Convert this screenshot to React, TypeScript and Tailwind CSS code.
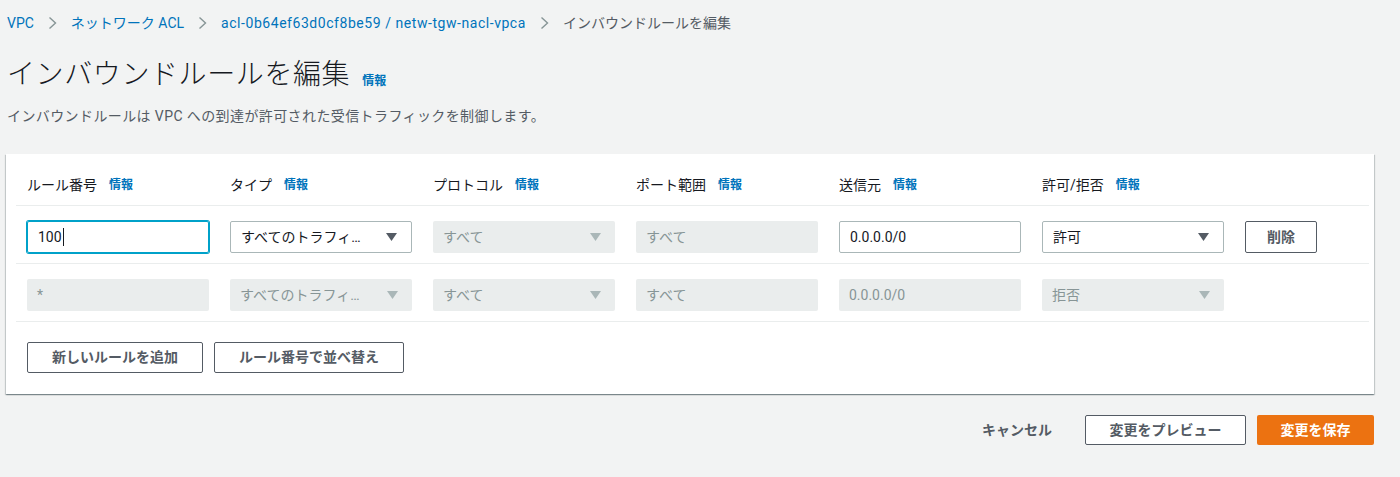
import React from 'react';

const FONT = "font-['Roboto','Noto_Sans_CJK_JP',sans-serif]";

const Info = () => (
  <span className="ml-[12px] text-[12px] font-bold text-[#0073bb]">情報</span>
);

const Chevron = () => (
  <svg width="9" height="14" viewBox="0 0 9 14" className="mx-[14px]">
    <polyline points="1.5,1.5 7.5,7 1.5,12.5" fill="none" stroke="#879596" strokeWidth="1.4" />
  </svg>
);

const Caret = ({ disabled }: { disabled?: boolean }) => (
  <svg width="11" height="8" viewBox="0 0 11 8">
    <polygon points="0,0 11,0 5.5,8" fill={disabled ? '#aab7b8' : '#545b64'} />
  </svg>
);

const Field = ({ value, disabled, focused }: { value: string; disabled?: boolean; focused?: boolean }) => {
  if (disabled) {
    return (
      <div className="flex h-[32px] w-[182px] items-center rounded-[2px] bg-[#eaeded] px-[10px] text-[14px] text-[#879596]">
        {value}
      </div>
    );
  }
  return (
    <div
      className={
        focused
          ? 'flex h-[32px] w-[182px] items-center rounded-[2px] border border-[#00a1c9] px-[10px] text-[14px] text-[#16191f] shadow-[0_0_0_1px_#00a1c9]'
          : 'flex h-[32px] w-[182px] items-center rounded-[2px] border border-[#aab7b8] px-[10px] text-[14px] text-[#16191f]'
      }
    >
      {value}
      {focused && <span className="ml-px h-[18px] w-px bg-[#16191f]" />}
    </div>
  );
};

const Select = ({ value, disabled }: { value: string; disabled?: boolean }) => (
  <div
    className={
      disabled
        ? 'flex h-[32px] w-[182px] items-center justify-between rounded-[2px] bg-[#eaeded] pl-[10px] pr-[14px] text-[14px] text-[#879596]'
        : 'flex h-[32px] w-[182px] items-center justify-between rounded-[2px] border border-[#aab7b8] pl-[10px] pr-[14px] text-[14px] text-[#16191f]'
    }
  >
    <span className="max-w-[130px] truncate">{value}</span>
    <Caret disabled={disabled} />
  </div>
);

const Btn = ({ children, w }: { children: React.ReactNode; w: string }) => (
  <button className={`flex h-[31px] items-center justify-center rounded-[2px] border border-[#545b64] bg-white text-[14px] font-bold text-[#545b64] ${w}`}>
    {children}
  </button>
);

const headers = ['ルール番号', 'タイプ', 'プロトコル', 'ポート範囲', '送信元', '許可/拒否'];

export default function App() {
  return (
    <div className={`min-h-[477px] bg-[#f2f3f3] ${FONT}`}>
      <div className="ml-[6px] w-[1368px] pt-[13px]">
        <nav className="flex h-[20px] items-center pl-px text-[14px]">
          <span className="text-[#0073bb]">VPC</span>
          <Chevron />
          <span className="text-[#0073bb]">ネットワーク ACL</span>
          <Chevron />
          <span className="tracking-[0.55px] text-[#0073bb]">acl-0b64ef63d0cf8be59 / netw-tgw-nacl-vpca</span>
          <Chevron />
          <span className="text-[#545b64]">インバウンドルールを編集</span>
        </nav>

        <div className="mt-[24px] flex h-[36px] items-center pl-px">
          <h1 className="text-[28px] font-light leading-[36px] tracking-[0.6px] text-[#16191f]">インバウンドルールを編集</h1>
          <span className="ml-[12px] mt-[12px] text-[12px] font-bold text-[#0073bb]">情報</span>
        </div>
        <p className="mt-[13px] pl-px text-[14px] leading-[20px] tracking-[0.4px] text-[#545b64]">
          インバウンドルールは VPC への到達が許可された受信トラフィックを制御します。
        </p>

        <div className="mt-[28px] bg-white pl-[10px] pr-[5px] shadow-[0_1px_1px_0_rgba(0,28,36,0.3),1px_1px_1px_0_rgba(0,28,36,0.15),-1px_1px_1px_0_rgba(0,28,36,0.15)]">
          <div className="flex gap-[21px] border-b border-[#eaeded] pb-[10px] pl-[11px] pt-[21px]">
            {headers.map((h) => (
              <div key={h} className="flex h-[20px] w-[182px] items-center text-[14px] text-[#16191f]">
                {h}
                <Info />
              </div>
            ))}
          </div>

          <div className="flex gap-[21px] border-b border-[#eaeded] pb-[10px] pl-[11px] pt-[15px]">
            <Field value="100" focused />
            <Select value="すべてのトラフィック" />
            <Select value="すべて" disabled />
            <Field value="すべて" disabled />
            <Field value="0.0.0.0/0" />
            <Select value="許可" />
            <button className="flex h-[32px] w-[72px] items-center justify-center rounded-[2px] border border-[#545b64] bg-white text-[14px] font-bold text-[#545b64]">
              削除
            </button>
          </div>

          <div className="flex gap-[21px] border-b border-[#eaeded] pb-[10px] pl-[11px] pt-[15px]">
            <Field value="*" disabled />
            <Select value="すべてのトラフィック" disabled />
            <Select value="すべて" disabled />
            <Field value="すべて" disabled />
            <Field value="0.0.0.0/0" disabled />
            <Select value="拒否" disabled />
          </div>

          <div className="flex gap-[11px] pb-[21px] pl-[11px] pt-[20px]">
            <Btn w="w-[176px]">新しいルールを追加</Btn>
            <Btn w="w-[190px]">ルール番号で並べ替え</Btn>
          </div>
        </div>

        <div className="mt-[21px] flex items-center justify-end">
          <span className="mr-[33px] text-[14px] font-bold text-[#545b64]">キャンセル</span>
          <button className="flex h-[30px] w-[161px] items-center justify-center rounded-[2px] border border-[#545b64] bg-white text-[14px] font-bold text-[#545b64]">
            変更をプレビュー
          </button>
          <button className="ml-[11px] flex h-[30px] w-[117px] items-center justify-center rounded-[2px] bg-[#ec7211] text-[14px] font-bold text-white">
            変更を保存
          </button>
        </div>
      </div>
    </div>
  );
}
